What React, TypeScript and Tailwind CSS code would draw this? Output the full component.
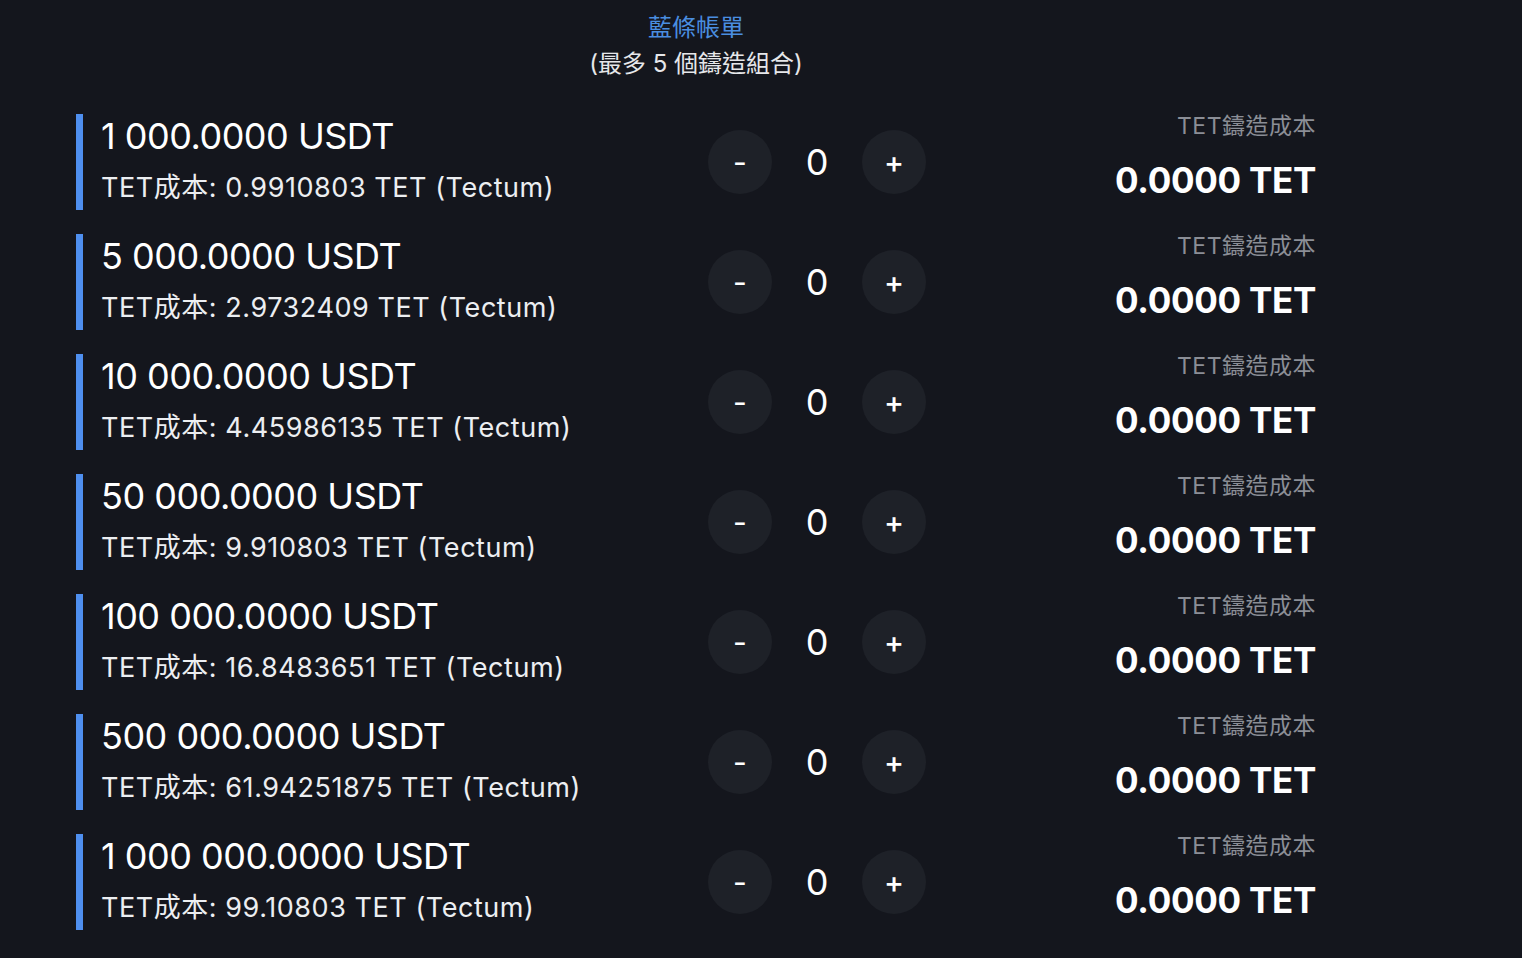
const rows = [
  { amount: "1 000.0000 USDT", cost: "0.9910803" },
  { amount: "5 000.0000 USDT", cost: "2.9732409" },
  { amount: "10 000.0000 USDT", cost: "4.45986135" },
  { amount: "50 000.0000 USDT", cost: "9.910803" },
  { amount: "100 000.0000 USDT", cost: "16.8483651" },
  { amount: "500 000.0000 USDT", cost: "61.94251875" },
  { amount: "1 000 000.0000 USDT", cost: "99.10803" },
];

const font = { fontFamily: 'Inter, "Noto Sans CJK TC", sans-serif' };

export default function App() {
  return (
    <div className="min-h-screen w-full bg-[#14161d] text-white" style={font}>
      <div className="w-[1240px] ml-[76px] pt-[12px]">
        <div className="text-center">
          <p className="text-[24px] leading-[32px] text-[#4a8ee0]">藍條帳單</p>
          <p className="text-[24px] leading-[32px] mt-[4px] text-[#e6e7ea]">(最多 5 個鑄造組合)</p>
        </div>

        <div className="mt-[34px] flex flex-col gap-[24px]">
          {rows.map((r) => (
            <div key={r.amount} className="flex items-center h-[96px]">
              <div className="w-[632px] h-full flex">
                <div className="w-[7px] h-full bg-[#4f8fef]" />
                <div className="pl-[18px] flex flex-col">
                  <p className="text-[36px] leading-[44px] text-white tracking-[-0.5px]">{r.amount}</p>
                  <p className="text-[27px] leading-[32px] mt-[14px] text-[#eceef1] tracking-[0.55px]">
                    TET成本: {r.cost} TET (Tectum)
                  </p>
                </div>
              </div>

              <div className="flex items-center">
                <button className="w-[64px] h-[64px] rounded-full bg-[#1e2128] text-[30px] leading-none text-white flex items-center justify-center">
                  -
                </button>
                <span className="w-[90px] text-center text-[36px] leading-none text-white">0</span>
                <button className="w-[64px] h-[64px] rounded-full bg-[#1e2128] text-[30px] font-medium leading-none text-white flex items-center justify-center">
                  +
                </button>
              </div>

              <div className="flex-1 h-full flex flex-col items-end">
                <p className="text-[23px] leading-[24px] text-[#8b8e96] tracking-[0.5px]">TET鑄造成本</p>
                <p className="mt-[22px] text-[35px] leading-[40px] font-bold text-white tracking-[-0.3px]">0.0000 TET</p>
              </div>
            </div>
          ))}
        </div>
      </div>
    </div>
  );
}
